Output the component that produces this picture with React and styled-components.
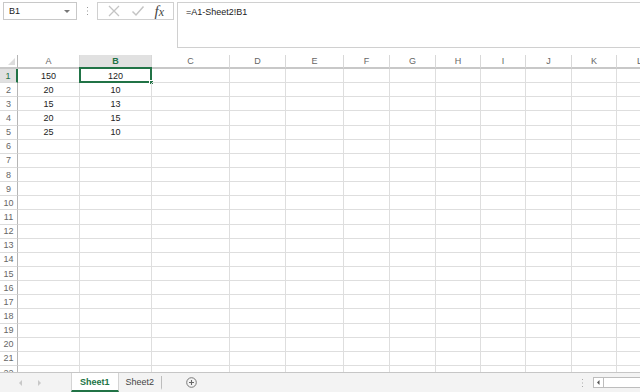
import React from "react";
import styled, { createGlobalStyle } from "styled-components";

const Global = createGlobalStyle`
  html, body { margin: 0; padding: 0; background: #fff; }
  body { font-family: "Liberation Sans", Arial, sans-serif; overflow: hidden; }
  * { box-sizing: border-box; }
`;

const GREEN = "#217346";
const COLS = [18, 62, 72, 78, 56, 58, 46, 46, 45, 45, 46, 45, 46];
const TEMPLATE = COLS.map((w) => `${w}px`).join(" ");
const LETTERS = ["A", "B", "C", "D", "E", "F", "G", "H", "I", "J", "K", "L"];
const DATA = [
  [150, 120],
  [20, 10],
  [15, 13],
  [20, 15],
  [25, 10],
];

const Page = styled.div`
  width: 640px;
  height: 392px;
  display: flex;
  flex-direction: column;
  overflow: hidden;
`;

const TopBar = styled.div`
  height: 48px;
  display: flex;
  align-items: flex-start;
  padding-top: 2px;
  flex-shrink: 0;
`;

const NameBox = styled.div`
  margin-left: 3px;
  width: 74px;
  height: 18px;
  border: 1px solid #c8c8c8;
  display: flex;
  align-items: center;
  justify-content: space-between;
  padding: 0 6px 0 5px;
  font-size: 9px;
  color: #222;
`;

const DropArrow = styled.span`
  width: 0;
  height: 0;
  border-left: 3px solid transparent;
  border-right: 3px solid transparent;
  border-top: 3px solid #777;
`;

const Grip = styled.div`
  width: 20px;
  height: 18px;
  display: flex;
  align-items: center;
  justify-content: center;
`;

const FnBox = styled.div`
  width: 77px;
  height: 18px;
  border: 1px solid #d0d0d0;
  display: flex;
  align-items: center;
  justify-content: space-around;
  padding: 0 4px;
`;

const Fx = styled.span`
  font-family: "Liberation Serif", "Times New Roman", serif;
  font-style: italic;
  font-size: 15px;
  color: #444;
  line-height: 1;
  & small { font-size: 12px; }
`;

const FormulaBar = styled.div`
  margin-left: 3px;
  flex: 1;
  height: 46px;
  border: 1px solid #d0d0d0;
  border-right: none;
  padding: 4px 8px;
  font-size: 9px;
  color: #222;
`;

const Sheet = styled.div`
  flex: 1;
  min-height: 0;
  overflow: hidden;
  margin-top: 7px;
`;

const Row = styled.div`
  display: grid;
  grid-template-columns: ${TEMPLATE};
  height: ${(p) => p.$h}px;
  width: 663px;
`;

const ColHead = styled.div`
  display: flex;
  align-items: center;
  justify-content: center;
  font-size: 9px;
  color: ${(p) => (p.$active ? GREEN : "#666")};
  font-weight: ${(p) => (p.$active ? "bold" : "normal")};
  background: ${(p) => (p.$active ? "#e1e1e1" : "#fff")};
  border-right: 1px solid #d8d8d8;
  border-bottom: ${(p) => (p.$active ? `2px solid ${GREEN}` : "2px solid #c8c8c8")};
`;

const Corner = styled.div`
  position: relative;
  border-right: 1px solid #b5b5b5;
  border-bottom: 2px solid #c8c8c8;
  &::after {
    content: "";
    position: absolute;
    right: 2px;
    bottom: 2px;
    width: 0;
    height: 0;
    border-left: 7px solid transparent;
    border-bottom: 7px solid #dcdcdc;
  }
`;

const RowHead = styled.div`
  display: flex;
  align-items: center;
  justify-content: center;
  font-size: 9px;
  color: ${(p) => (p.$active ? GREEN : "#666")};
  background: ${(p) => (p.$active ? "#e1e1e1" : "#fff")};
  border-right: ${(p) => (p.$active ? `2px solid ${GREEN}` : "1px solid #b5b5b5")};
  border-bottom: 1px solid #dcdcdc;
`;

const Cell = styled.div`
  position: relative;
  display: flex;
  align-items: center;
  justify-content: center;
  font-size: 9px;
  color: #222;
  border-right: 1px solid #dedede;
  border-bottom: 1px solid #dedede;
`;

const Selection = styled.div`
  position: absolute;
  left: -1px;
  top: -2px;
  right: -1px;
  bottom: -1px;
  border: 2px solid ${GREEN};
  pointer-events: none;
`;

const Handle = styled.div`
  position: absolute;
  right: -4px;
  bottom: -4px;
  width: 5px;
  height: 5px;
  background: ${GREEN};
  border: 1px solid #fff;
`;

const TabBar = styled.div`
  height: 20px;
  flex-shrink: 0;
  display: flex;
  align-items: stretch;
  background: #f3f3f3;
  border-top: 1px solid #c6c6c6;
`;

const NavGroup = styled.div`
  width: 71px;
  display: flex;
  align-items: center;
  padding-left: 19px;
  gap: 16px;
`;

const Tab = styled.div`
  padding: 0 ${(p) => (p.$active ? 8 : 7)}px;
  display: flex;
  align-items: center;
  font-size: 9px;
  background: ${(p) => (p.$active ? "#fff" : "transparent")};
  color: ${(p) => (p.$active ? GREEN : "#444")};
  font-weight: ${(p) => (p.$active ? "bold" : "normal")};
  border-bottom: ${(p) => (p.$active ? `2px solid ${GREEN}` : "2px solid transparent")};
  border-left: ${(p) => (p.$active ? "1px solid #d4d4d4" : "none")};
  border-right: ${(p) => (p.$active ? "1px solid #d4d4d4" : "1px solid #bdbdbd")};
  margin: ${(p) => (p.$active ? "0" : "3px 0 2px")};
`;

const AddBtn = styled.div`
  margin-left: 24px;
  display: flex;
  align-items: center;
`;

const RightTools = styled.div`
  margin-left: auto;
  display: flex;
  align-items: center;
  gap: 9px;
`;

const ScrollTrack = styled.div`
  width: 47px;
  height: 11px;
  background: #fff;
  border: 1px solid #bdbdbd;
  border-right: none;
  display: flex;
  align-items: center;
`;

const ScrollArrow = styled.div`
  width: 10px;
  height: 100%;
  border-right: 1px solid #bdbdbd;
  display: flex;
  align-items: center;
  justify-content: center;
`;

const VDots = ({ color = "#9a9a9a" }) => (
  <svg width="3" height="10" viewBox="0 0 3 10">
    <rect x="1" y="1" width="1" height="1" fill={color} />
    <rect x="1" y="4.5" width="1" height="1" fill={color} />
    <rect x="1" y="8" width="1" height="1" fill={color} />
  </svg>
);

const Tri = ({ dir, color, size = 4 }) => (
  <svg width={size} height={size * 2} viewBox="0 0 4 8">
    {dir === "left" ? (
      <polygon points="4,0 0,4 4,8" fill={color} />
    ) : (
      <polygon points="0,0 4,4 0,8" fill={color} />
    )}
  </svg>
);

export default function App() {
  const rowCount = 22;
  return (
    <Page>
      <Global />
      <TopBar>
        <NameBox>
          <span>B1</span>
          <DropArrow />
        </NameBox>
        <Grip>
          <VDots />
        </Grip>
        <FnBox>
          <svg width="14" height="12" viewBox="0 0 14 12">
            <path d="M2 1 L12 11 M12 1 L2 11" stroke="#c4c4c4" strokeWidth="1.3" fill="none" />
          </svg>
          <svg width="14" height="12" viewBox="0 0 14 12">
            <path d="M1.5 6.5 L5 10 L12.5 1.5" stroke="#c4c4c4" strokeWidth="1.5" fill="none" />
          </svg>
          <Fx>
            f<small>x</small>
          </Fx>
        </FnBox>
        <FormulaBar>=A1-Sheet2!B1</FormulaBar>
      </TopBar>
      <Sheet>
        <Row $h={14}>
          <Corner />
          {LETTERS.map((l) => (
            <ColHead key={l} $active={l === "B"}>
              {l}
            </ColHead>
          ))}
        </Row>
        {Array.from({ length: rowCount }, (_, r) => (
          <Row key={r} $h={14.15}>
            <RowHead $active={r === 0}>{r + 1}</RowHead>
            {LETTERS.map((l, c) => (
              <Cell key={l}>
                {DATA[r] && c < 2 ? DATA[r][c] : ""}
                {r === 0 && c === 1 && (
                  <Selection>
                    <Handle />
                  </Selection>
                )}
              </Cell>
            ))}
          </Row>
        ))}
      </Sheet>
      <TabBar>
        <NavGroup>
          <Tri dir="left" color="#c8c8c8" size={3} />
          <Tri dir="right" color="#c8c8c8" size={3} />
        </NavGroup>
        <Tab $active>Sheet1</Tab>
        <Tab>Sheet2</Tab>
        <AddBtn>
          <svg width="11" height="11" viewBox="0 0 11 11">
            <circle cx="5.5" cy="5.5" r="4.8" stroke="#777" strokeWidth="1" fill="none" />
            <path d="M5.5 3 V8 M3 5.5 H8" stroke="#666" strokeWidth="1.1" />
          </svg>
        </AddBtn>
        <RightTools>
          <VDots color="#aaa" />
          <ScrollTrack>
            <ScrollArrow>
              <Tri dir="left" color="#555" size={2.5} />
            </ScrollArrow>
          </ScrollTrack>
        </RightTools>
      </TabBar>
    </Page>
  );
}
